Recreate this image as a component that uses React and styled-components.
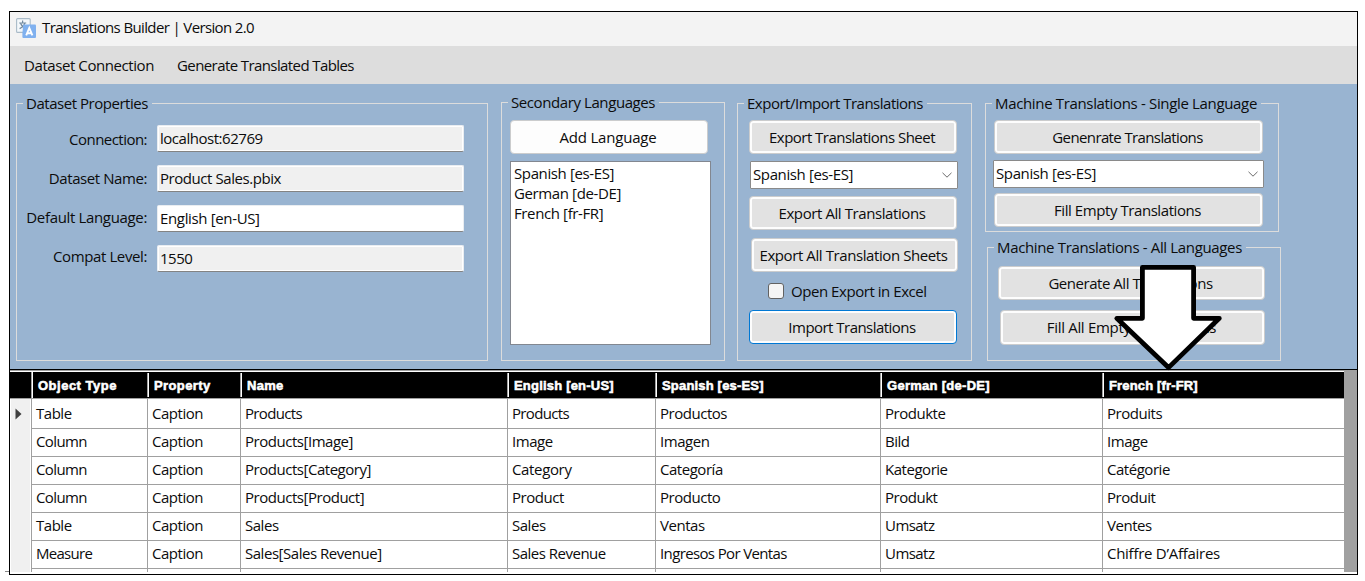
import React from 'react';
import styled, { createGlobalStyle } from 'styled-components';

const PANEL = '#99b4d1';
const LINE = '#a0a0a0';

const GlobalStyle = createGlobalStyle`
  * { box-sizing: border-box; }
  body {
    margin: 0;
    background: #fff;
    color: #0c0c0c;
    font: 15px/21px "Open Sans", "Noto Sans", sans-serif;
    letter-spacing: -0.45px;
    overflow: hidden;
  }
`;

const Page = styled.div`
  height: 581px;
  padding: 11px 7px 0 9px;
`;

const Window = styled.main`
  position: relative;
  height: 564px;
  border: 1px solid #000;
  display: flex;
  flex-direction: column;
  background: #fff;
`;

const EdgeTick = styled.span`
  position: absolute;
  left: -5px;
  top: 559px;
  width: 4px;
  height: 1px;
  background: #888;
`;

const TitleBar = styled.header`
  height: 34px;
  flex: none;
  display: flex;
  align-items: center;
  gap: 6px;
  padding: 0 0 3px 6px;
  background: #f3f3f3;
  letter-spacing: -0.63px;
`;

const MenuBar = styled.nav`
  height: 38px;
  flex: none;
  display: flex;
  align-items: center;
  gap: 23px;
  padding: 0 0 0 14px;
  background: #dddddd;
`;

const MenuItem = styled.span`
  letter-spacing: ${(p) => p.$ls}px;
`;

const Panel = styled.section`
  height: 286px;
  flex: none;
  display: flex;
  align-items: flex-start;
  padding: 19px 0 0 6px;
  background: ${PANEL};
  border-bottom: 1px solid #000;
`;

const Group = styled.div`
  width: ${(p) => p.$w}px;
  height: ${(p) => p.$h}px;
  margin: ${(p) => p.$m || '0'};
  padding: 0 0 0 ${(p) => p.$pl || 0}px;
  border: 1px solid #dcdcdc;
`;

const Legend = styled.div`
  width: fit-content;
  height: 21px;
  margin: -11px 0 0 ${(p) => p.$ml}px;
  padding: 0 4px 0 3px;
  background: ${PANEL};
  letter-spacing: ${(p) => p.$ls}px;
  white-space: nowrap;
`;

const Form = styled.div`
  display: flex;
  gap: 10px;
`;

const Labels = styled.div`
  width: 130px;
  padding-top: 6px;
  text-align: right;
`;

const Label = styled.div`
  line-height: 39px;
  letter-spacing: ${(p) => p.$ls}px;
  white-space: nowrap;
`;

const Fields = styled.div`
  display: flex;
  flex-direction: column;
  gap: 13px;
  padding-top: 11px;
`;

const Field = styled.div`
  width: 307px;
  height: 27px;
  padding-left: 2px;
  line-height: 25px;
  background: ${(p) => (p.$editable ? '#fff' : '#f0f0f0')};
  border: 1px solid #e9edf1;
  border-bottom-color: #838383;
  border-radius: 2px;
  box-shadow: inset 0 0 0 1px #fff;
  letter-spacing: ${(p) => p.$ls}px;
`;

const Button = styled.button`
  display: block;
  width: ${(p) => p.$w}px;
  height: ${(p) => p.$h || 34}px;
  margin: ${(p) => p.$mt || 0}px 0 0 ${(p) => p.$ml || 0}px;
  padding: 0 2px 0 0;
  font: inherit;
  color: inherit;
  letter-spacing: ${(p) => p.$ls}px;
  white-space: nowrap;
  text-align: center;
  background: ${(p) => (p.$plain ? '#fdfdfd' : '#e2e2e2')};
  border: 1px solid ${(p) => (p.$focus ? '#0078d4' : '#cbcccd')};
  border-radius: 4px;
  box-shadow: inset 0 0 0 2px #fdfdfd;
`;

const ListBox = styled.div`
  width: 201px;
  height: 184px;
  margin: 7px 0 0;
  padding: 1px 3px;
  background: #fff;
  border: 1px solid #828790;
`;

const ListItem = styled.div`
  height: 20px;
  letter-spacing: -0.38px;
`;

const Select = styled.div`
  width: ${(p) => p.$w}px;
  height: 28px;
  margin: ${(p) => p.$mt}px 0 0 ${(p) => p.$ml || 0}px;
  padding: 0 4px 1px 2px;
  display: flex;
  align-items: center;
  justify-content: space-between;
  background: #fff;
  border: 1px solid #8a8a8a;
  border-radius: 1px;
  letter-spacing: -0.38px;
`;

const CheckRow = styled.div`
  display: flex;
  align-items: center;
  gap: 7px;
  height: 16px;
  margin: 11px 0 11px 19px;
`;

const CheckBox = styled.span`
  width: 16px;
  height: 16px;
  background: #f5f5f5;
  border: 1px solid #626262;
  border-radius: 3px;
`;

const Stack = styled.div`
  margin-left: 13px;
`;

const GridArea = styled.section`
  flex: 1;
  display: flex;
  min-height: 0;
  overflow: hidden;
  background: ${LINE};
  border-top: 1px solid ${LINE};
  border-bottom: 2px solid #fff;
`;

const Grid = styled.div`
  width: 1334px;
  background: #fff;
  border-top: 1px solid #fff;
`;

const COLS = '21px 116px 93px 267px 148px 225px 222px 242px';

const HeadRow = styled.div`
  display: grid;
  grid-template-columns: ${COLS};
  height: 27px;
  background: #000;
  border-bottom: 1px solid ${LINE};
`;

const HeadCell = styled.div`
  height: ${(p) => (p.$first ? 26 : 24)}px;
  margin-top: ${(p) => (p.$first ? 0 : 1)}px;
  padding: ${(p) => (p.$first ? 2 : 1)}px 0 0 6px;
  border-left: 1px solid ${LINE};
  box-shadow: inset 1px 0 0 #fff;
  color: #fff;
  font: bold 13px/24px "Liberation Sans", Arial, sans-serif;
  -webkit-text-stroke: 0.55px #fff;
  letter-spacing: ${(p) => p.$ls}px;
`;

const Row = styled.div`
  display: grid;
  grid-template-columns: ${COLS};
  height: 28px;
`;

const RowHead = styled.div`
  display: flex;
  align-items: center;
  margin: 0 1px;
  padding-left: 4px;
  background: #f0f0f0;
  border-bottom: 1px solid ${LINE};
`;

const Cell = styled.div`
  padding-left: 4px;
  line-height: 29px;
  white-space: nowrap;
  border-left: 1px solid ${LINE};
  border-bottom: 1px solid ${LINE};
  letter-spacing: ${(p) => p.$ls}px;
`;

const ArrowSvg = styled.svg`
  position: absolute;
  left: 1102px;
  top: 250px;
`;

const AppIcon = () => (
  <svg width="20" height="20" viewBox="0 0 20 20">
    <rect x="0.6" y="0.6" width="13.6" height="13.8" rx="1" fill="#f4f8fb" stroke="#a9bac8" strokeWidth="1.1" />
    <path d="M6.6 2.6V4.6M3.2 5H10.2M8.8 5.2C8 8 6 9.6 3.6 10.6M4.6 5.6C5.6 8 7.4 9.8 10 10.6" fill="none" stroke="#7089a0" strokeWidth="1.2" />
    <path d="M7.2 6.4H19A1 1 0 0 1 20 7.4V19A1 1 0 0 1 19 20H7.4A1 1 0 0 1 6.4 19V15.4Z" fill="#80b1ef" />
    <path d="M10.2 17.4L13.3 10L16.4 17.4M11.4 15.2H15.2" fill="none" stroke="#fff" strokeWidth="1.9" />
  </svg>
);

const Chevron = () => (
  <svg width="12" height="8" viewBox="0 0 12 8">
    <path d="M1.5 1.8L6 6.2L10.5 1.8" fill="none" stroke="#6c6c6c" strokeWidth="1" />
  </svg>
);

const Marker = () => (
  <svg width="7" height="12" viewBox="0 0 7 12">
    <path d="M0.5 0.5L6.5 6L0.5 11.5Z" fill="#404040" />
  </svg>
);

const DownArrow = () => (
  <ArrowSvg width="112" height="112" viewBox="1112 262 112 112">
    <path
      d="M1142.4 267.4H1193.6V318.3H1219.3L1168.5 367.6L1116.8 318.3H1142.4Z"
      fill="#fff"
      stroke="#000"
      strokeWidth="4.8"
      strokeLinejoin="round"
    />
  </ArrowSvg>
);

const HEADERS = [
  ['Object Type', 0.5],
  ['Property', 0.4],
  ['Name', 0.3],
  ['English [en-US]', 0.2],
  ['Spanish [es-ES]', 0.18],
  ['German [de-DE]', 0.28],
  ['French [fr-FR]', 0.15],
];

const ROWS = [
  ['Table', 'Caption', 'Products', 'Products', 'Productos', 'Produkte', 'Produits'],
  ['Column', 'Caption', 'Products[Image]', 'Image', 'Imagen', 'Bild', 'Image'],
  ['Column', 'Caption', 'Products[Category]', 'Category', 'Categoría', 'Kategorie', 'Catégorie'],
  ['Column', 'Caption', 'Products[Product]', 'Product', 'Producto', 'Produkt', 'Produit'],
  ['Table', 'Caption', 'Sales', 'Sales', 'Ventas', 'Umsatz', 'Ventes'],
  ['Measure', 'Caption', 'Sales[Sales Revenue]', 'Sales Revenue', 'Ingresos Por Ventas', 'Umsatz', 'Chiffre D’Affaires'],
  ['', '', '', '', '', '', ''],
];

const SPACING = {
  'Ingresos Por Ventas': -0.63,
  'Chiffre D’Affaires': -0.27,
  Umsatz: -0.55,
  Products: -0.65,
  Column: -0.6,
  Measure: -0.72,
  Category: -0.35,
  'Sales Revenue': -0.5,
};

export default function App() {
  return (
    <>
      <GlobalStyle />
      <Page>
        <Window>
          <EdgeTick />
          <TitleBar>
            <AppIcon />
            <span>Translations Builder | Version 2.0</span>
          </TitleBar>
          <MenuBar>
            <MenuItem $ls={-0.42}>Dataset Connection</MenuItem>
            <MenuItem $ls={-0.59}>Generate Translated Tables</MenuItem>
          </MenuBar>
          <Panel>
            <Group $w={472} $h={258}>
              <Legend $ml={6} $ls={-0.47}>Dataset Properties</Legend>
              <Form>
                <Labels>
                  <Label $ls={-0.53}>Connection:</Label>
                  <Label $ls={-0.42}>Dataset Name:</Label>
                  <Label $ls={-0.34}>Default Language:</Label>
                  <Label $ls={-0.39}>Compat Level:</Label>
                </Labels>
                <Fields>
                  <Field $ls={-0.47}>localhost:62769</Field>
                  <Field $ls={-0.44}>Product Sales.pbix</Field>
                  <Field $ls={-0.35} $editable>English [en-US]</Field>
                  <Field $ls={-0.5}>1550</Field>
                </Fields>
              </Form>
            </Group>
            <Group $w={224} $h={259} $m="-1px 0 0 13px" $pl={8}>
              <Legend $ml={-2} $ls={-0.41}>Secondary Languages</Legend>
              <Button $w={198} $mt={7} $ls={-0.2} $plain>Add Language</Button>
              <ListBox>
                <ListItem>Spanish [es-ES]</ListItem>
                <ListItem>German [de-DE]</ListItem>
                <ListItem>French [fr-FR]</ListItem>
              </ListBox>
            </Group>
            <Group $w={235} $h={258} $m="0 0 0 12px" $pl={11}>
              <Legend $ml={-5} $ls={-0.49}>Export/Import Translations</Legend>
              <Button $w={208} $mt={6} $ls={-0.52}>Export Translations Sheet</Button>
              <Select $w={208} $mt={7} $ml={1}>Spanish [es-ES]<Chevron /></Select>
              <Button $w={208} $mt={7} $ls={-0.41}>Export All Translations</Button>
              <Button $w={207} $mt={8} $ml={2} $ls={-0.41}>Export All Translation Sheets</Button>
              <CheckRow><CheckBox />Open Export in Excel</CheckRow>
              <Button $w={208} $ls={-0.53} $focus>Import Translations</Button>
            </Group>
            <Stack>
              <Group $w={294} $h={129} $pl={7}>
                <Legend $ml={-1} $ls={-0.34}>Machine Translations - Single Language</Legend>
                <Button $w={269} $mt={6} $ml={1} $ls={-0.62}>Genenrate Translations</Button>
                <Select $w={271} $mt={6}>Spanish [es-ES]<Chevron /></Select>
                <Button $w={269} $mt={5} $ml={1} $ls={-0.43}>Fill Empty Translations</Button>
              </Group>
              <Group $w={294} $h={114} $m="15px 0 0 2px" $pl={10}>
                <Legend $ml={-4} $ls={-0.35}>Machine Translations - All Languages</Legend>
                <Button $w={267} $mt={8} $ls={-0.46}>Generate All Translations</Button>
                <Button $w={265} $h={35} $mt={10} $ml={2} $ls={-0.31}>Fill All Empty Translations</Button>
              </Group>
            </Stack>
          </Panel>
          <GridArea>
            <Grid>
              <HeadRow>
                <span />
                {HEADERS.map(([name, ls], i) => (
                  <HeadCell key={name} $first={i === 0} $ls={ls}>{name}</HeadCell>
                ))}
              </HeadRow>
              {ROWS.map((row, r) => (
                <Row key={r}>
                  <RowHead>{r === 0 && <Marker />}</RowHead>
                  {row.map((text, c) => (
                    <Cell key={c} $ls={SPACING[text] ?? -0.47}>{text}</Cell>
                  ))}
                </Row>
              ))}
            </Grid>
          </GridArea>
          <DownArrow />
        </Window>
      </Page>
    </>
  );
}
